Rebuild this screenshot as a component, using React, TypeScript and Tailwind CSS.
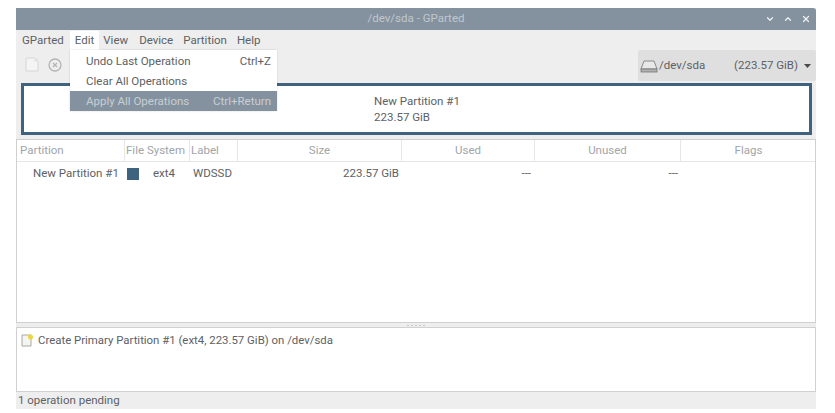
import { ChevronDown, ChevronUp, X } from "lucide-react";

const columns = [
  { name: "Partition", width: "w-[108px]", align: "text-left pl-[3px]" },
  { name: "File System", width: "w-[65px]", align: "text-left pl-[1px]" },
  { name: "Label", width: "w-[48px]", align: "text-left pl-[1px]" },
  { name: "Size", width: "w-[164px]", align: "text-center" },
  { name: "Used", width: "w-[133px]", align: "text-center" },
  { name: "Unused", width: "w-[146px]", align: "text-center" },
  { name: "Flags", width: "w-[135px]", align: "text-center" },
];

function MenuRow({
  label,
  shortcut,
  active,
}: {
  label: string;
  shortcut?: string;
  active?: boolean;
}) {
  return (
    <div
      className={`flex h-[20px] items-center justify-between pl-[16px] pr-[6px] pt-[1px] ${
        active ? "bg-[#8492a0] text-[#c8ced3]" : "text-[#5c6165]"
      }`}
    >
      <span>{label}</span>
      {shortcut && <span>{shortcut}</span>}
    </div>
  );
}

export default function App() {
  return (
    <div className="h-[413px] w-[835px] overflow-hidden bg-white pl-[16px] pt-[8px] font-['Roboto',sans-serif] text-[11.5px] text-[#5c6165]">
      <div className="relative flex h-[401px] w-[800px] flex-col bg-[#eeeeee]">
        {/* title bar */}
        <div className="relative flex h-[22px] shrink-0 items-center justify-center rounded-tr-[3px] bg-[#8492a0] text-[#c0c7cd]">
          /dev/sda - GParted
          <div className="absolute right-[5px] top-[6px] flex items-center gap-[8px] text-[#eef0f2]">
            <ChevronDown size={10} strokeWidth={3} />
            <ChevronUp size={10} strokeWidth={3} />
            <X size={10} strokeWidth={3} />
          </div>
        </div>

        {/* menu bar */}
        <div className="flex h-[20px] shrink-0 items-center pl-[1px] pt-[1px]">
          <span className="px-[5px]">GParted</span>
          <span className="ml-[1px] flex h-[20px] items-center bg-white px-[5px]">Edit</span>
          <span className="ml-[-1px] px-[5px]">View</span>
          <span className="ml-[1px] px-[5px]">Device</span>
          <span className="px-[5px]">Partition</span>
          <span className="px-[5px]">Help</span>
        </div>

        {/* toolbar */}
        <div className="flex h-[33px] shrink-0 items-start justify-between">
          <div className="flex items-center gap-[9px] pl-[9px] pt-[7px]">
            <svg width="14" height="15" viewBox="0 0 14 15" fill="none">
              <path d="M1 1h9l3 3v10H1z" fill="#f4f4f4" stroke="#d6d6d6" />
              <circle cx="11" cy="3" r="2" fill="#e4e4e4" />
            </svg>
            <svg width="14" height="14" viewBox="0 0 14 14" fill="none">
              <circle cx="7" cy="7" r="6" fill="#eeeeee" stroke="#b4b4b4" strokeWidth="1.3" />
              <path d="M5 5l4 4M9 5l-4 4" stroke="#b4b4b4" strokeWidth="1.3" />
            </svg>
          </div>
          <div className="flex h-[31px] w-[178px] items-center rounded-[2px] bg-[#dfdfdf] pl-[2px] pr-[5px]">
            <svg width="18" height="14" viewBox="0 0 18 14" fill="none">
              <path d="M4 2h10l3 8H1z" fill="#e8e8e8" stroke="#8a8a8a" />
              <rect x="1" y="10" width="16" height="3" fill="#b0b0b0" stroke="#777777" strokeWidth="0.8" />
            </svg>
            <span className="ml-[1px]">/dev/sda</span>
            <span className="ml-auto">(223.57 GiB)</span>
            <svg className="ml-[6px]" width="7" height="4" viewBox="0 0 7 4">
              <path d="M0 0h7L3.5 4z" fill="#4a4a4a" />
            </svg>
          </div>
        </div>

        {/* partition graph */}
        <div className="ml-[5px] mr-[4px] flex h-[52px] shrink-0 flex-col justify-center border-[3px] border-[#3f627f] bg-white pl-[350px] leading-[16px]">
          <span>New Partition #1</span>
          <span>223.57 GiB</span>
        </div>

        {/* partition table */}
        <div className="mt-[4px] flex h-[184px] shrink-0 flex-col border border-[#d0d0d0] bg-white">
          <div className="flex h-[22px] shrink-0 border-b border-[#e6e6e6] text-[#a0a5a8]">
            {columns.map((col) => (
              <div
                key={col.name}
                className={`${col.width} ${col.align} shrink-0 border-r border-[#e6e6e6] leading-[21px] last:border-r-0`}
              >
                {col.name}
              </div>
            ))}
          </div>
          <div className="flex h-[22px] items-center pt-[1px]">
            <div className="w-[108px] shrink-0 pl-[16px]">New Partition #1</div>
            <div className="flex w-[65px] shrink-0 items-center pl-[2px]">
              <div className="h-[12px] w-[12px] bg-[#3f627f]" />
              <span className="ml-[14px]">ext4</span>
            </div>
            <div className="w-[48px] shrink-0 pl-[3px]">WDSSD</div>
            <div className="w-[164px] shrink-0 pr-[3px] text-right">223.57 GiB</div>
            <div className="w-[133px] shrink-0 pr-[4px] text-right">---</div>
            <div className="w-[146px] shrink-0 pr-[3px] text-right">---</div>
          </div>
        </div>

        {/* pane handle */}
        <div className="flex h-[4px] shrink-0 items-center justify-center gap-[2px]">
          {[0, 1, 2, 3, 4].map((i) => (
            <div key={i} className="h-[1px] w-[2px] bg-[#c8c8c8]" />
          ))}
        </div>

        {/* pending operations */}
        <div className="flex h-[65px] shrink-0 items-start border border-[#d0d0d0] bg-white pl-[4px] pt-[4px]">
          <svg width="13" height="14" viewBox="0 0 13 14" fill="none" className="mt-[1px]">
            <path d="M1 2h9v11H1z" fill="#f4f4f0" stroke="#a8a8a4" />
            <circle cx="9.5" cy="4" r="2.5" fill="#f2d53c" />
          </svg>
          <span className="ml-[4px] text-[11.4px] leading-[16px]">Create Primary Partition #1 (ext4, 223.57 GiB) on /dev/sda</span>
        </div>

        {/* status bar */}
        <div className="flex h-[17px] shrink-0 items-center pl-[2px] pt-[1px]">1 operation pending</div>

        {/* edit menu */}
        <div className="absolute left-[54px] top-[42px] w-[207px] bg-white pt-[1px] shadow-[0_0_2px_rgba(0,0,0,0.15)]">
          <MenuRow label="Undo Last Operation" shortcut="Ctrl+Z" />
          <MenuRow label="Clear All Operations" />
          <MenuRow label="Apply All Operations" shortcut="Ctrl+Return" active />
        </div>
      </div>
    </div>
  );
}
